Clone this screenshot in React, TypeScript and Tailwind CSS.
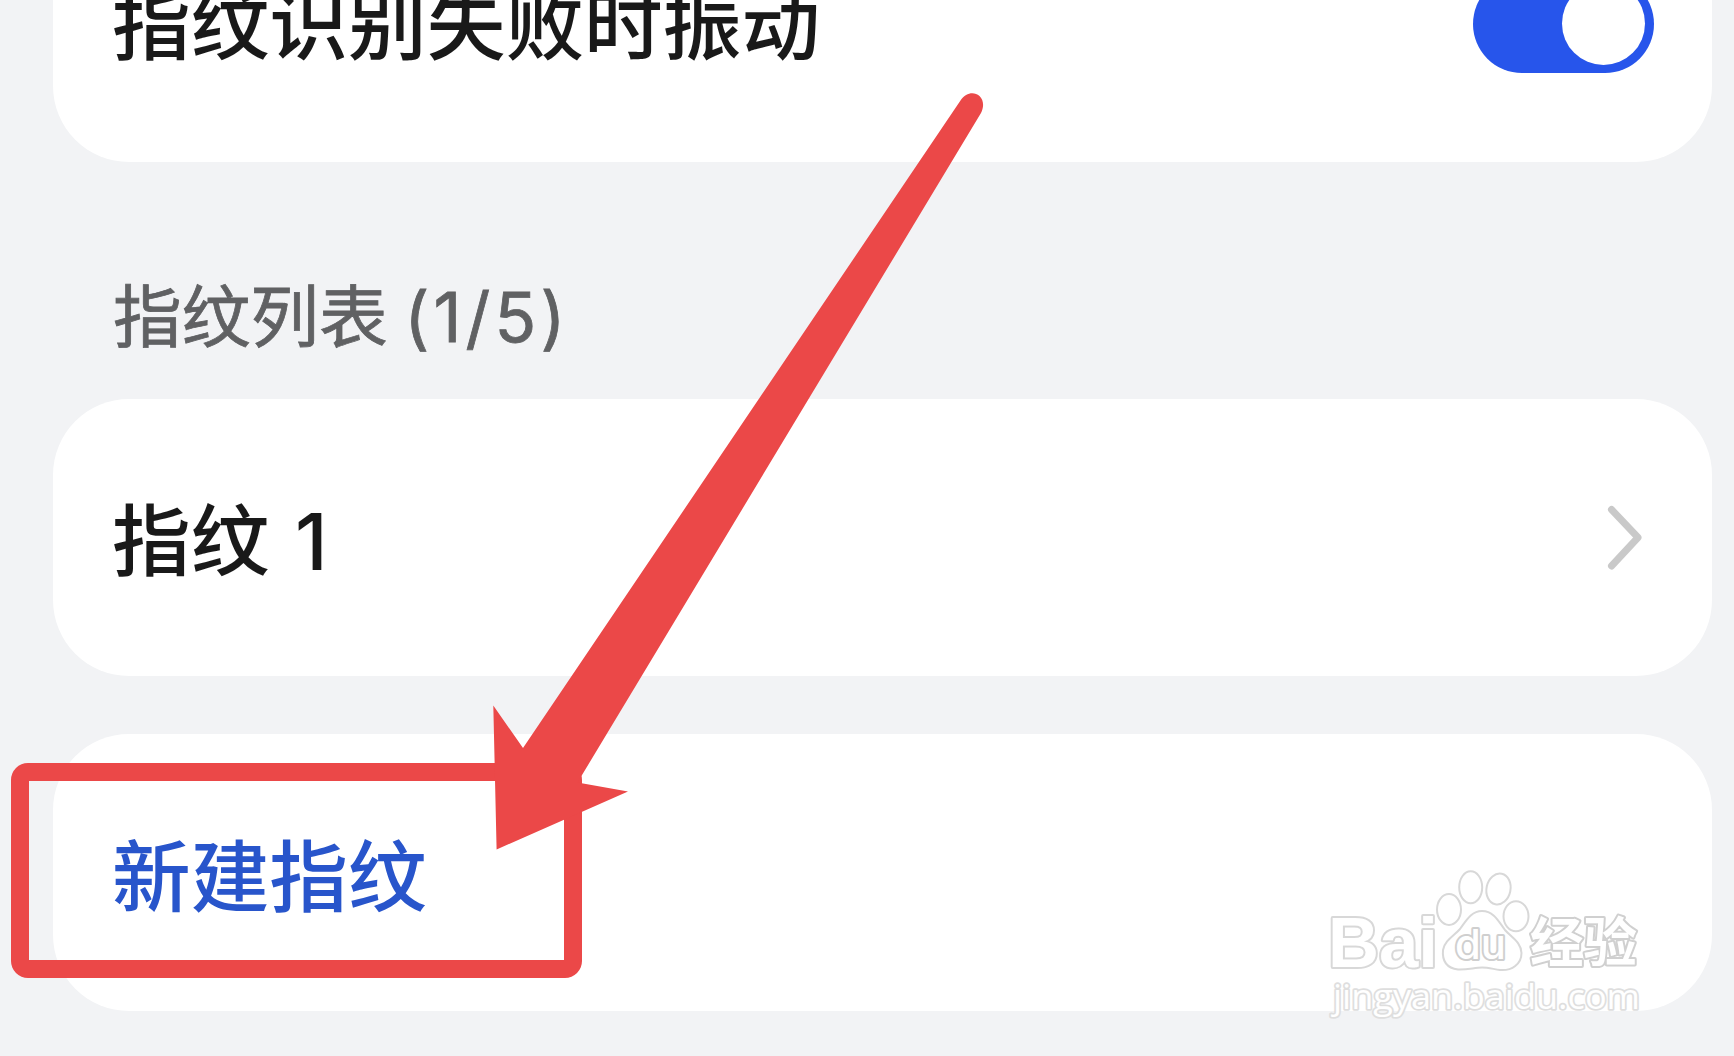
import type { ReactNode } from "react";

function Card({ children }: { children: ReactNode }) {
  return (
    <div className="flex h-[277px] shrink-0 items-center justify-between rounded-[76px] bg-white pl-[59px] pr-[58px]">
      {children}
    </div>
  );
}

function Toggle() {
  return (
    <span
      role="switch"
      aria-checked="true"
      className="flex h-[98px] w-[181px] items-center justify-end rounded-full bg-[#2755eb] pr-[9px]"
    >
      <span className="size-[83px] rounded-full bg-white" />
    </span>
  );
}

function Chevron() {
  return (
    <svg className="mr-[10px]" width="38" height="70" viewBox="0 0 38 70" fill="none" aria-hidden>
      <path
        d="M5.5 6.5 L32 34.5 L5.5 63"
        stroke="#c9c9c9"
        strokeWidth="7"
        strokeLinecap="round"
        strokeLinejoin="round"
      />
    </svg>
  );
}

/** Red frame and arrow pointing at the "new fingerprint" row. */
function Annotation() {
  return (
    <>
      <div className="absolute left-[11px] top-[763px] h-[215px] w-[571px] rounded-[17px] border-[18px] border-[#eb4848]" />
      <svg
        className="absolute left-0 top-0"
        width="1734"
        height="1056"
        viewBox="0 0 1734 1056"
        fill="#eb4848"
        aria-hidden
      >
        <path d="M496.6 849.5 L493.3 705.5 L523 748 L960.5 100.5 C966 92.5 974 91.5 979.5 96 C984 100.5 984 107 981 113 L577.5 782.5 L628 791.5 Z" />
      </svg>
    </>
  );
}

function Watermark() {
  return (
    <svg
      className="absolute left-[1320px] top-[862px]"
      width="330"
      height="166"
      viewBox="1320 862 330 166"
      fill="#ffffff"
      stroke="#d8d8d8"
      strokeWidth="2"
      strokeLinejoin="round"
      aria-hidden
    >
      <text
        x="1328"
        y="967"
        fontSize="71"
        textLength="110"
        lengthAdjust="spacingAndGlyphs"
        strokeWidth="4"
        className="font-['Liberation_Sans',sans-serif] font-bold [paint-order:stroke]"
      >
        Bai
      </text>
      <ellipse cx="1449" cy="909.5" rx="12" ry="15.5" />
      <ellipse cx="1470.7" cy="887.3" rx="11.5" ry="16" />
      <ellipse cx="1498.5" cy="889" rx="12" ry="15.5" transform="rotate(12 1498.5 889)" />
      <ellipse cx="1516" cy="916.3" rx="12.5" ry="15" />
      <path d="M1482 911 C1494 911 1499 922 1505 930 C1512 938 1521 942 1521.5 953 C1521.5 964 1512 971 1500 970 C1493 969 1488 967.5 1482 967.5 C1475 967.5 1467 970 1458 969.5 C1447 968 1442 961 1443 950 C1445 940 1454 936 1460 929 C1466 921 1471 911 1482 911 Z" />
      <text
        x="1455"
        y="959"
        fontSize="41"
        textLength="51"
        lengthAdjust="spacingAndGlyphs"
        strokeWidth="4"
        stroke="#cfcfcf"
        className="font-['Inter',sans-serif] font-medium [paint-order:stroke]"
      >
        du
      </text>
      <text
        x="1530"
        y="962"
        fontSize="53"
        textLength="107"
        lengthAdjust="spacingAndGlyphs"
        strokeWidth="4"
        stroke="#d0d0d0"
        className="font-['Noto_Sans_CJK_SC',sans-serif] font-bold [paint-order:stroke]"
      >
        经验
      </text>
      <text
        x="1333"
        y="1009"
        fontSize="34.5"
        textLength="307"
        lengthAdjust="spacingAndGlyphs"
        strokeWidth="3.5"
        stroke="#dedede"
        className="font-['Open_Sans',sans-serif] font-normal [paint-order:stroke]"
      >
        jingyan.baidu.com
      </text>
    </svg>
  );
}

export default function App() {
  return (
    <main className="relative h-[1056px] w-[1734px] overflow-hidden bg-[#f2f3f5] font-['Noto_Sans_CJK_SC',sans-serif] text-[78.7px] font-medium leading-none text-[#191919]">
      <div className="-mt-[115px] flex flex-col pl-[53px] pr-[22px]">
        <Card>
          <span className="whitespace-nowrap pb-[7px]">指纹识别失败时振动</span>
          <Toggle />
        </Card>

        <h2 className="flex h-[237px] shrink-0 items-baseline whitespace-pre pl-[60px] pt-[116px] text-[68.7px] font-normal text-[#606163] [-webkit-text-stroke:0.8px_#606163]">
          指纹列表{" "}
          <span className="ml-px font-['Inter',sans-serif] tracking-[4.2px]">(1/5)</span>
        </h2>

        <Card>
          <span className="flex items-baseline whitespace-pre pt-[3px]">
            指纹 <span className="ml-[8px] font-['Inter',sans-serif]">1</span>
          </span>
          <Chevron />
        </Card>

        <div className="mt-[58px]">
          <Card>
            <span className="text-[#2855cb]">新建指纹</span>
          </Card>
        </div>
      </div>

      <Watermark />
      <Annotation />
    </main>
  );
}
